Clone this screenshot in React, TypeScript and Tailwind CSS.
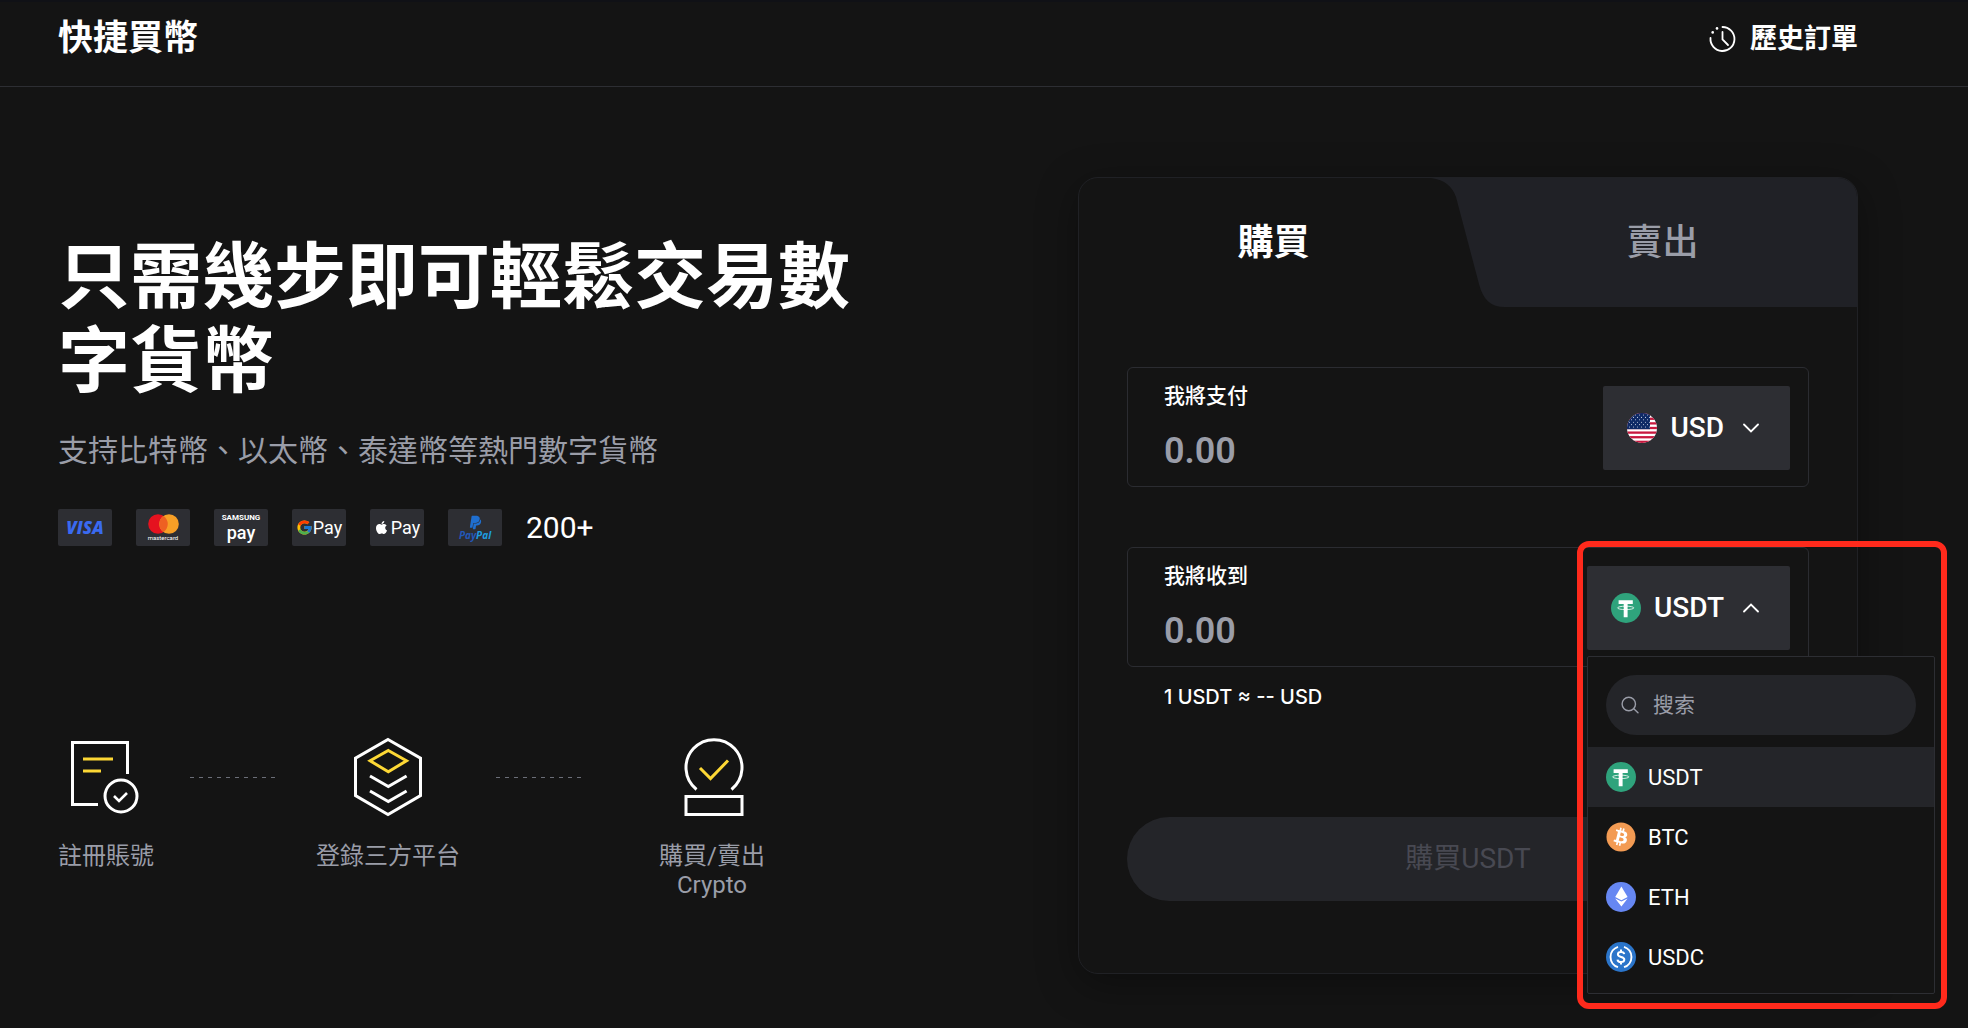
import { useState, type ReactNode } from "react";
import { FaApple, FaBitcoin, FaPaypal } from "react-icons/fa";
import { FcGoogle } from "react-icons/fc";

function HistoryIcon() {
  return (
    <svg className="size-7" viewBox="0 0 28 28" fill="none" stroke="currentColor" strokeWidth="1.8" strokeLinecap="round">
      <path d="M14.500 2a12 12 0 1 1-12 11" />
      <path d="M14.500 7v7.500l5.500 5.500" />
      <circle cx="9" cy="3.400" r="1.300" fill="currentColor" stroke="none" />
      <circle cx="4.700" cy="7.400" r="1.300" fill="currentColor" stroke="none" />
    </svg>
  );
}

function Chevron({ up }: { up?: boolean }) {
  return (
    <svg className="w-4 h-[10px]" viewBox="0 0 16 10" fill="none" stroke="currentColor" strokeWidth="1.8" strokeLinecap="round">
      <path d={up ? "M1 8.5l7-7 7 7" : "M1 1.5l7 7 7-7"} />
    </svg>
  );
}

function SearchIcon() {
  return (
    <svg className="size-[18px] shrink-0 text-[#9a9da8]" viewBox="0 0 18 18" fill="none" stroke="currentColor" strokeWidth="1.4" strokeLinecap="round">
      <circle cx="7.8" cy="8" r="6.7" />
      <path d="M12.8 12.8l4.2 4" />
    </svg>
  );
}

const STRIPES = [0, 1, 2, 3, 4, 5, 6];
const STAR_ROWS = [1, 3.4, 5.8, 8.2, 10.6, 13];

function UsFlag() {
  return (
    <svg className="size-[30px]" viewBox="0 0 30 30">
      <clipPath id="flag-round">
        <circle cx="15" cy="15" r="15" />
      </clipPath>
      <g clipPath="url(#flag-round)">
        <rect width="30" height="30" fill="#fff" />
        {STRIPES.map((i) => (
          <rect key={i} y={(i * 60) / 13} width="30" height={30 / 13} fill="#c8183f" />
        ))}
        <rect width="23" height="16.2" fill="#0f2a66" />
        {STAR_ROWS.map((y, i) => (
          <path
            key={y}
            d={i % 2 ? `M2.5 ${y + 1}H23` : `M4.5 ${y + 1}H23`}
            stroke="#c5cde0"
            strokeWidth="1.1"
            strokeLinecap="round"
            strokeDasharray="0 4"
          />
        ))}
      </g>
    </svg>
  );
}

function UsdtIcon() {
  return (
    <svg className="size-[30px]" viewBox="0 0 30 30">
      <circle cx="15" cy="15" r="15" fill="#2fa37c" />
      <path d="M7.6 7.2h14.2v3.7h-5.2v13.3h-3.9V10.9H7.6z" fill="#fff" />
      <ellipse cx="14.7" cy="14.9" rx="8.2" ry="1.7" fill="none" stroke="#fff" strokeWidth="0.8" />
    </svg>
  );
}

function BtcIcon() {
  return (
    <svg className="size-[30px]" viewBox="0 0 30 30">
      <circle cx="15" cy="15" r="12" fill="#fff" />
      <FaBitcoin size={30} color="#f39b53" />
    </svg>
  );
}

function EthIcon() {
  return (
    <svg className="size-[30px]" viewBox="0 0 30 30">
      <circle cx="15" cy="15" r="15" fill="#6687f2" />
      <path d="M15.4 4.6l6.2 10.5-6.2 3.2-6.2-3.2z" fill="#fff" />
      <path d="M9.2 16.4l6.2 3.2 6.2-3.2-6.2 8.2z" fill="#fff" />
    </svg>
  );
}

function UsdcIcon() {
  return (
    <svg className="size-[30px]" viewBox="0 0 30 30">
      <circle cx="15" cy="15" r="15" fill="#2b75ca" />
      <path d="M12 4.8a10.7 10.7 0 0 0 0 20.4M18 4.8a10.7 10.7 0 0 1 0 20.4" fill="none" stroke="#fff" strokeWidth="1.9" />
      <path
        d="M18.2 12.2c-.2-1.6-1.4-2.3-3.2-2.3-1.9 0-3.1.8-3.1 2.4 0 3.6 6.4 1.7 6.4 5.2 0 1.7-1.4 2.6-3.3 2.6-2 0-3.3-.8-3.5-2.5M15 7.6v2.3M15 20.1v2.3"
        fill="none"
        stroke="#fff"
        strokeWidth="2"
      />
    </svg>
  );
}

const COINS = [
  { symbol: "USDT", icon: <UsdtIcon /> },
  { symbol: "BTC", icon: <BtcIcon /> },
  { symbol: "ETH", icon: <EthIcon /> },
  { symbol: "USDC", icon: <UsdcIcon /> },
];

function PayBadge({ children }: { children: ReactNode }) {
  return (
    <li className="flex flex-col items-center justify-center w-[54px] h-[37px] rounded-xs bg-[#2d2e33] leading-none">{children}</li>
  );
}

function PaymentMethods() {
  return (
    <ul className="flex gap-6 mt-[38px]">
      <PayBadge>
        <span className="font-['Open_Sans'] text-[17px] font-extrabold italic text-[#3a6af0]">VISA</span>
      </PayBadge>
      <PayBadge>
        <svg className="w-[31px] h-[21px]" viewBox="0 0 31 21">
          <circle cx="10" cy="10" r="9.8" fill="#e5121f" />
          <circle cx="21" cy="10" r="9.8" fill="#f79f26" />
          <path d="M15.5 1.9a9.8 9.8 0 0 1 0 16.2 9.8 9.8 0 0 1 0-16.2z" fill="#ee6022" />
        </svg>
        <span className="text-[6px]">mastercard</span>
      </PayBadge>
      <PayBadge>
        <span className="text-[8px] leading-[9px] font-bold">SAMSUNG</span>
        <span className="text-[18px] leading-[21px] font-medium">pay</span>
      </PayBadge>
      <PayBadge>
        <span className="flex items-center">
          <FcGoogle className="size-[17px]" />
          <span className="text-[18px]">Pay</span>
        </span>
      </PayBadge>
      <PayBadge>
        <span className="flex items-center gap-[2px]">
          <FaApple className="size-[15px]" />
          <span className="text-[18px]">Pay</span>
        </span>
      </PayBadge>
      <PayBadge>
        <FaPaypal className="size-[15px] text-[#1f6fd0]" />
        <span className="font-['Open_Sans'] text-[10px] leading-[11px] font-bold italic">
          <span className="text-[#2358b8]">Pay</span>
          <span className="text-[#1d9ce0]">Pal</span>
        </span>
      </PayBadge>
      <li className="flex items-center text-[30px] leading-8">200+</li>
    </ul>
  );
}

function RegisterIcon() {
  return (
    <svg className="w-[72px] h-20" viewBox="0 0 72 80" fill="none" stroke="#fff" strokeWidth="3">
      <path d="M57.500 37V5.500H2.500v62H28" />
      <path d="M13 22h30M13 34h18" stroke="#fdd835" />
      <circle cx="51" cy="59" r="16" />
      <path d="M44 59l5 5 8-8" strokeWidth="2.6" />
    </svg>
  );
}

function PlatformIcon() {
  return (
    <svg className="w-[72px] h-20" viewBox="0 0 72 80" fill="none" stroke="#fff" strokeWidth="3">
      <path d="M36 2.5l32.5 18.700v37.400L36 77.500 3.500 58.600V21.200z" />
      <path d="M36.300 13.500l18.200 10.300-18.200 11-18.200-11z" stroke="#fdd835" />
      <path d="M18 39l18.300 10.500L54.600 39M18 54l18.300 10.500L54.600 54" />
    </svg>
  );
}

function TradeIcon() {
  return (
    <svg className="w-[72px] h-20" viewBox="0 0 72 80" fill="none" stroke="#fff" strokeWidth="3">
      <path d="M20.500 52.500a28 28 0 1 1 35 0" />
      <rect x="10" y="59.500" width="56" height="18" />
      <path d="M24 31l10.500 10.500L52 23.500" stroke="#fdd835" />
    </svg>
  );
}

function DashLine() {
  return (
    <svg className="w-[90px] h-20" viewBox="0 0 90 80" stroke="#6b6e78" strokeDasharray="4 5">
      <path d="M0 40.500h86" />
    </svg>
  );
}

function Steps() {
  return (
    <ol className="flex items-start gap-9 mt-[191px] text-2xl leading-[29px] text-center text-[#9a9da8]">
      <li className="flex flex-col items-center gap-[25px]">
        <RegisterIcon />
        註冊賬號
      </li>
      <DashLine />
      <li className="flex flex-col items-center gap-[25px]">
        <PlatformIcon />
        登錄三方平台
      </li>
      <DashLine />
      <li className="flex flex-col items-center gap-[25px] w-[180px]">
        <TradeIcon />
        <span>
          購買/賣出
          <br />
          Crypto
        </span>
      </li>
    </ol>
  );
}

interface AmountFieldProps {
  id: string;
  label: string;
  children: ReactNode;
}

function AmountField({ id, label, children }: AmountFieldProps) {
  return (
    <div className="flex items-center justify-between h-[120px] pt-[2px] pl-9 pr-[18px] border border-[#2b2c31] rounded-md">
      <div className="flex flex-col gap-4 min-w-0">
        <label htmlFor={id} className="text-[21px] leading-[30px] font-medium">
          {label}
        </label>
        <input
          id={id}
          inputMode="decimal"
          placeholder="0.00"
          className="w-full bg-transparent text-4xl leading-12 h-12 font-semibold outline-none placeholder:text-[#9a9da8]"
        />
      </div>
      {children}
    </div>
  );
}

interface CurrencyButtonProps {
  icon: ReactNode;
  symbol: string;
  open?: boolean;
  onClick?: () => void;
}

function CurrencyButton({ icon, symbol, open, onClick }: CurrencyButtonProps) {
  return (
    <button
      type="button"
      aria-haspopup="listbox"
      aria-expanded={!!open}
      onClick={onClick}
      className="flex items-center h-[84px] pl-6 pr-[31px] rounded-xs bg-[#2d2e33] text-[28px] font-medium cursor-pointer"
    >
      {icon}
      <span className="ml-[13px] mr-[19px]">{symbol}</span>
      <Chevron up={open} />
    </button>
  );
}

function CoinPicker({ selected, onSelect }: { selected: string; onSelect: (symbol: string) => void }) {
  const [open, setOpen] = useState(true);
  const [query, setQuery] = useState("");
  const coin = COINS.find((c) => c.symbol === selected) ?? COINS[0];
  const shown = COINS.filter((c) => c.symbol.includes(query.toUpperCase()));

  return (
    <div className="relative">
      <CurrencyButton icon={coin.icon} symbol={coin.symbol} open={open} onClick={() => setOpen(!open)} />
      {open && (
        <div className="absolute left-0 top-[90px] z-10 w-[348px] pt-[18px] pb-[6px] rounded-xs border border-[#2d2e33] bg-[#141414]">
          <label className="flex items-center gap-[14px] h-[60px] mx-[18px] mb-3 pl-[15px] pr-4 rounded-full bg-[#242529]">
            <SearchIcon />
            <input
              value={query}
              onChange={(e) => setQuery(e.target.value)}
              placeholder="搜索"
              aria-label="搜索"
              className="w-full bg-transparent text-[21px] leading-[30px] outline-none placeholder:text-[#9a9da8]"
            />
          </label>
          <div role="listbox">
            {shown.map((c) => (
              <button
                key={c.symbol}
                type="button"
                role="option"
                aria-selected={c.symbol === selected}
                onClick={() => onSelect(c.symbol)}
                className={`flex items-center gap-3 w-full h-[60px] px-[18px] text-[22px] cursor-pointer ${
                  c.symbol === selected ? "bg-[#242529]" : ""
                }`}
              >
                {c.icon}
                {c.symbol}
              </button>
            ))}
          </div>
        </div>
      )}
      <div className="absolute -left-[10px] -top-[25px] z-20 w-[370px] h-[468px] rounded-xl border-6 border-[#ff2a1c] pointer-events-none" />
    </div>
  );
}

function TradeCard() {
  const [coin, setCoin] = useState("USDT");

  return (
    <section className="rounded-[20px] border border-[#202125] bg-[#141414] shadow-[0_10px_40px_rgba(0,0,0,0.35)]">
      <div role="tablist" className="relative grid grid-cols-2 h-[129px] rounded-t-[19px] overflow-hidden">
        <svg className="absolute inset-0 size-full" viewBox="0 0 778 129" preserveAspectRatio="none">
          <path d="M352 0C366 2 373 8 377 19L400 106C404 122 412 129 426 129H778V0z" fill="#202126" />
        </svg>
        <button type="button" role="tab" aria-selected="true" className="relative text-4xl font-bold cursor-pointer">
          購買
        </button>
        <button type="button" role="tab" aria-selected="false" className="relative text-4xl font-medium text-[#9a9da8] cursor-pointer">
          賣出
        </button>
      </div>

      <form className="flex flex-col px-12 pt-[60px] pb-[72px]" onSubmit={(e) => e.preventDefault()}>
        <AmountField id="pay" label="我將支付">
          <CurrencyButton icon={<UsFlag />} symbol="USD" />
        </AmountField>
        <div className="mt-[60px]">
          <AmountField id="receive" label="我將收到">
            <CoinPicker selected={coin} onSelect={setCoin} />
          </AmountField>
        </div>
        <p className="mt-[15px] pl-[37px] font-[Inter,sans-serif] text-xl leading-[30px] font-medium">1 {coin} ≈ -- USD</p>
        <button type="submit" disabled className="mt-[105px] h-[84px] rounded-full bg-[#242529] text-[28px] text-[#484952]">
          購買{coin}
        </button>
      </form>
    </section>
  );
}

export default function App() {
  return (
    <div
      lang="zh-Hant"
      className="min-h-screen overflow-x-hidden border-t-2 border-[#101116] bg-[#141414] text-white font-[Roboto,'Noto_Sans_CJK_TC',sans-serif]"
    >
      <header className="flex items-center justify-between pt-[13px] pb-[23px] pl-[58px] pr-[110px] border-b border-[#2d2e33]">
        <h1 className="text-[35px] leading-12 font-bold">快捷買幣</h1>
        <a href="#history" className="flex items-center gap-[14px] text-[27px] leading-12 font-bold">
          <HistoryIcon />
          歷史訂單
        </a>
      </header>

      <main className="grid grid-cols-[17fr_13fr] items-start pt-[90px] pb-[54px] pl-[58px] pr-[110px]">
        <div className="pt-[59px] pr-40">
          <h2 className="text-7xl leading-[84px] font-bold">只需幾步即可輕鬆交易數字貨幣</h2>
          <p className="mt-[27px] text-3xl leading-10 text-[#9a9da8]">支持比特幣、以太幣、泰達幣等熱門數字貨幣</p>
          <PaymentMethods />
          <Steps />
        </div>
        <TradeCard />
      </main>
    </div>
  );
}
